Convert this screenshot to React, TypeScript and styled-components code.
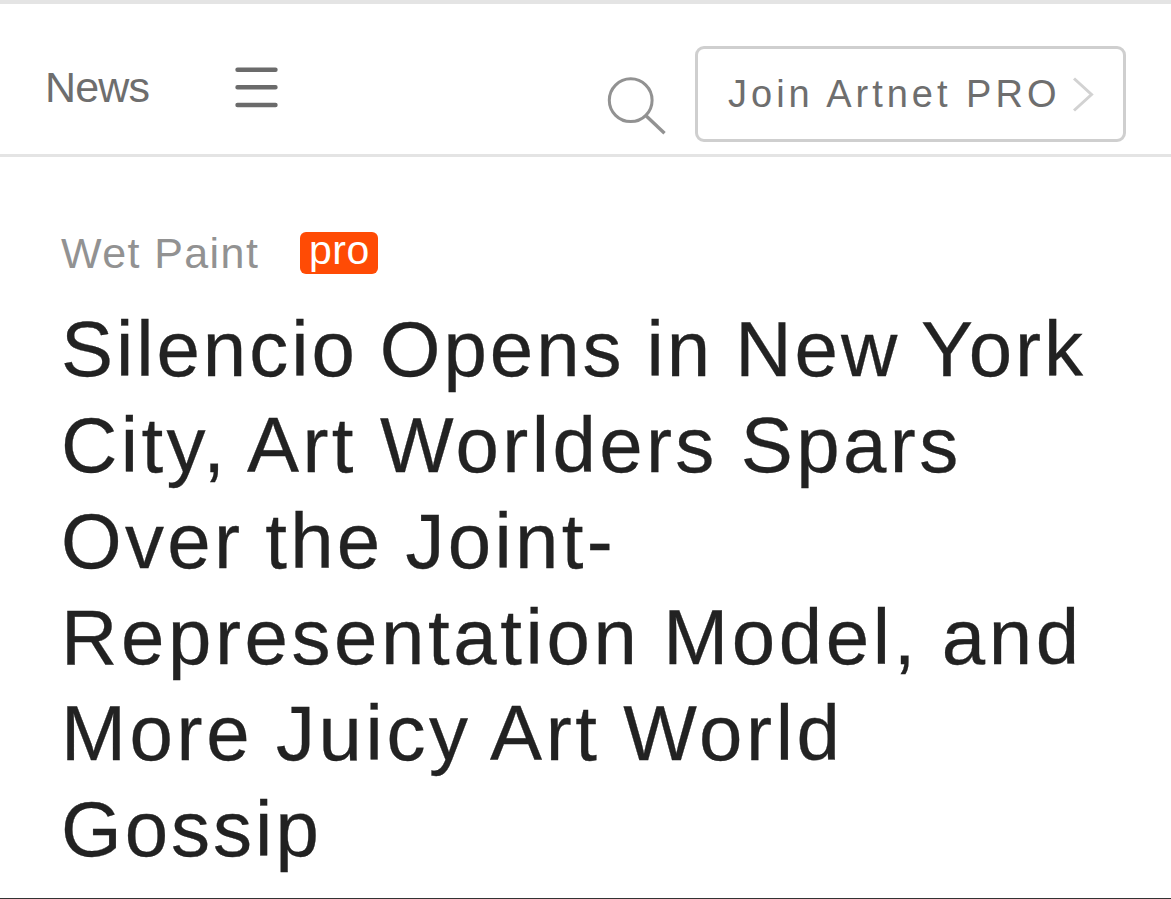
import React from 'react';
import styled, { createGlobalStyle } from 'styled-components';

const GlobalStyle = createGlobalStyle`
  * {
    box-sizing: border-box;
  }

  body {
    margin: 0;
    background: #fff;
    font-family: 'Liberation Sans', Arial, sans-serif;
  }
`;

const Page = styled.div`
  height: 899px;
  border-top: 4px solid #e4e4e4;
  border-bottom: 1px solid #333;
  overflow: hidden;
`;

const Header = styled.header`
  display: flex;
  justify-content: space-between;
  height: 153px;
  padding: 42px 45px 0 45px;
  border-bottom: 3px solid #e4e4e4;
`;

const Side = styled.div`
  display: flex;
  align-items: flex-start;
`;

const SectionLink = styled.a`
  width: 190px;
  color: #6e6e6e;
  font-size: 43px;
  letter-spacing: -0.8px;
  line-height: 82px;
  white-space: nowrap;
`;

const MenuButton = styled.button`
  margin: 20px 0 0;
  padding: 0;
  border: 0;
  background: none;
  line-height: 0;
`;

const SearchButton = styled(MenuButton)`
  margin: 30px 28px 0 0;
`;

const JoinButton = styled.button`
  display: flex;
  align-items: center;
  justify-content: space-between;
  width: 431px;
  height: 96px;
  padding: 0 28px 0 30px;
  border: 3px solid #cfcfcf;
  border-radius: 9px;
  background: #fff;
  color: #6e6e6e;
  font-family: inherit;
  font-size: 38px;
  letter-spacing: 4px;
  white-space: nowrap;
`;

const Article = styled.main`
  padding: 74px 61px 0;
`;

const Kicker = styled.div`
  display: flex;
  align-items: center;
  height: 44px;
`;

const Category = styled.span`
  width: 239px;
  color: #929292;
  font-size: 43px;
  letter-spacing: 1.4px;
  white-space: nowrap;
`;

const ProBadge = styled.span`
  width: 78px;
  height: 42px;
  padding-left: 1px;
  border-radius: 6px;
  background: #ff4b05;
  color: #fff;
  font-size: 41px;
  letter-spacing: 0.6px;
  line-height: 37px;
  text-align: center;
`;

const Title = styled.h1`
  margin: 26px 0 0;
  color: #222;
  font-size: 78px;
  font-weight: 400;
  line-height: 96.1px;
  white-space: nowrap;
  -webkit-text-stroke: 0.3px;
`;

const Line = styled.span<{ $spacing: number; $wordSpacing: number }>`
  display: block;
  letter-spacing: ${({ $spacing }) => $spacing}px;
  word-spacing: ${({ $wordSpacing }) => $wordSpacing}px;
`;

const titleLines = [
  { text: 'Silencio Opens in New York', spacing: 2.95, wordSpacing: -2.5 },
  { text: 'City, Art Worlders Spars', spacing: 3.4, wordSpacing: -2 },
  { text: 'Over the Joint-', spacing: 3.3, wordSpacing: -3 },
  { text: 'Representation Model, and', spacing: 3.6, wordSpacing: -2.5 },
  { text: 'More Juicy Art World', spacing: 3.6, wordSpacing: -2.5 },
  { text: 'Gossip', spacing: 3, wordSpacing: 0 },
];

const MenuIcon = () => (
  <svg width="43" height="42" viewBox="0 0 43 42" stroke="#6b6b6b" strokeWidth="4.4" strokeLinecap="round">
    <path d="M2.5 3.7h38M2.5 21.3h38M2.5 39h38" />
  </svg>
);

const SearchIcon = () => (
  <svg width="60" height="60" viewBox="0 0 60 60" fill="none" stroke="#929292" strokeWidth="3">
    <circle cx="23.7" cy="24.2" r="21.4" />
    <path d="M38.5 39.3l19 18" strokeWidth="3.4" />
  </svg>
);

const ChevronIcon = () => (
  <svg width="22" height="36" viewBox="0 0 22 36" fill="none" stroke="#d2d2d2" strokeWidth="3">
    <path d="M1 2.5l17.5 16L1 34.5" />
  </svg>
);

const App = () => (
  <>
    <GlobalStyle />
    <Page>
      <Header>
        <Side>
          <SectionLink>News</SectionLink>
          <MenuButton aria-label="Menu"><MenuIcon /></MenuButton>
        </Side>
        <Side>
          <SearchButton aria-label="Search"><SearchIcon /></SearchButton>
          <JoinButton>
            Join Artnet PRO
            <ChevronIcon />
          </JoinButton>
        </Side>
      </Header>
      <Article>
        <Kicker>
          <Category>Wet Paint</Category>
          <ProBadge>pro</ProBadge>
        </Kicker>
        <Title>
          {titleLines.map(({ text, spacing, wordSpacing }) => (
            <Line key={text} $spacing={spacing} $wordSpacing={wordSpacing}>{text}</Line>
          ))}
        </Title>
      </Article>
    </Page>
  </>
);

export default App;
